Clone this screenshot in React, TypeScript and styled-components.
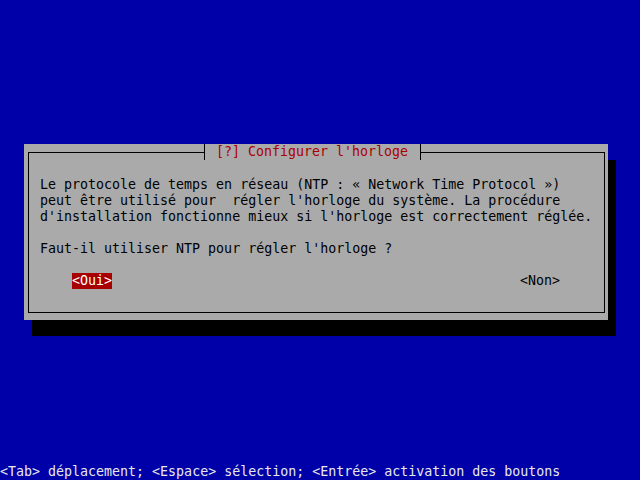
import React from "react";
import styled, { createGlobalStyle } from "styled-components";

const GlobalStyle = createGlobalStyle`
  html, body {
    margin: 0;
    padding: 0;
    background: #0000a8;
  }
`;

const Screen = styled.div`
  width: 640px;
  height: 480px;
  display: flex;
  flex-direction: column;
  background: #0000a8;
  font-family: "DejaVu Sans Mono", "Liberation Mono", monospace;
  font-size: 13.3px;
  line-height: 16px;
  overflow: hidden;
`;

const Dialog = styled.div`
  margin: 144px 0 0 24px;
  width: 584px;
  height: 176px;
  box-sizing: border-box;
  padding: 8px 0 0 4px;
  background: #aaaaaa;
  box-shadow: 8px 16px 0 #000000;
`;

const Frame = styled.div`
  position: relative;
  width: 577px;
  height: 161px;
  box-sizing: border-box;
  border: 1px solid #000000;
  padding: 24px 11px 0 11px;
  color: #000000;
`;

const Title = styled.div`
  position: absolute;
  top: -9px;
  left: 175px;
  height: 16px;
  padding: 0 12px 0 11px;
  background: #aaaaaa;
  border-left: 1px solid #000000;
  border-right: 1px solid #000000;
  color: #a80000;
  white-space: pre;
`;

const Text = styled.div`
  white-space: pre;
`;

const Blank = styled.div`
  height: 16px;
`;

const ButtonRow = styled.div`
  display: flex;
  justify-content: space-between;
  padding: 0 33px 0 32px;
`;

const Button = styled.span<{ active?: boolean }>`
  display: block;
  height: 16px;
  white-space: pre;
  background: ${(props) => (props.active ? "#a80000" : "transparent")};
  color: ${(props) => (props.active ? "#ffffff" : "#000000")};
`;

const HelpLine = styled.div`
  margin-top: auto;
  height: 16px;
  color: #e8e8e8;
  white-space: pre;
`;

const App = () => {
  return (
    <Screen>
      <GlobalStyle />
      <Dialog>
        <Frame>
          <Title>[?] Configurer l'horloge</Title>
          <Text>Le protocole de temps en réseau (NTP : « Network Time Protocol »)</Text>
          <Text>peut être utilisé pour  régler l'horloge du système. La procédure</Text>
          <Text>d'installation fonctionne mieux si l'horloge est correctement réglée.</Text>
          <Blank />
          <Text>Faut-il utiliser NTP pour régler l'horloge ?</Text>
          <Blank />
          <ButtonRow>
            <Button active>&lt;Oui&gt;</Button>
            <Button>&lt;Non&gt;</Button>
          </ButtonRow>
        </Frame>
      </Dialog>
      <HelpLine>&lt;Tab&gt; déplacement; &lt;Espace&gt; sélection; &lt;Entrée&gt; activation des boutons</HelpLine>
    </Screen>
  );
};

export default App;
